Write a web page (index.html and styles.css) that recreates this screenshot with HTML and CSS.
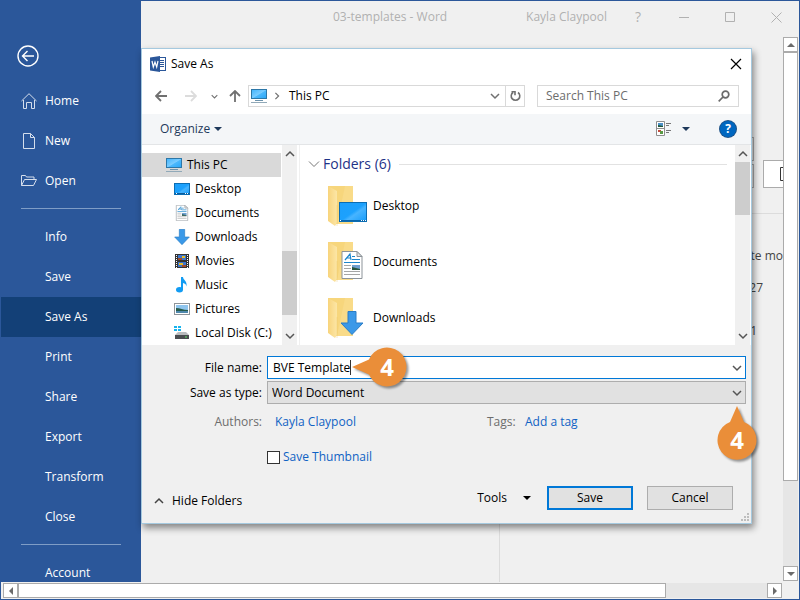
FILE: index.html
```html
<!DOCTYPE html>
<html lang="en">
<head>
<meta charset="utf-8">
<title>03-templates - Word</title>
<link rel="stylesheet" href="styles.css">
</head>
<body>
<svg class="defs" aria-hidden="true">
  <defs>
    <linearGradient id="screen" x1="0" y1="0" x2="1" y2="1"><stop offset="0" stop-color="#3fb2fb"/><stop offset=".5" stop-color="#7accff"/><stop offset=".55" stop-color="#4bb8fc"/><stop offset="1" stop-color="#2aa6f7"/></linearGradient>
    <linearGradient id="desk" x1="0" y1="0" x2="1" y2="1"><stop offset="0" stop-color="#1c9ffb"/><stop offset=".5" stop-color="#1ca1fd"/><stop offset=".6" stop-color="#47b4ff"/><stop offset="1" stop-color="#149bfa"/></linearGradient>
    <linearGradient id="flap" x1="0" y1="0" x2="1" y2="0"><stop offset="0" stop-color="#f8d47c"/><stop offset="1" stop-color="#fce6a6"/></linearGradient>
    <symbol id="pc" viewBox="0 0 16 16"><rect x=".5" y="1.5" width="15" height="9" fill="url(#screen)" stroke="#2c77a8"/><path d="M4 12.5h8" stroke="#6d93ac"/><path d="M0 14.5h16" stroke="#91a9b8"/></symbol>
    <symbol id="desktop" viewBox="0 0 16 16"><rect x=".5" y="2.5" width="15" height="11" fill="url(#desk)" stroke="#0b6db3"/><path d="M1 12.5h14" stroke="#0a5c9c"/><path d="M2 12.5h1M11 12.5h1M13 12.5h1" stroke="#fff"/></symbol>
    <symbol id="desktop-big" viewBox="0 0 28 21"><rect x=".5" y=".5" width="27" height="19" fill="url(#desk)" stroke="#0b6db3"/><path d="M1 18.5h26" stroke="#0a66ab"/><path d="M1 18.500h1M22 18.500h1M24 18.500h1M26 18.500h1" stroke="#fff"/></symbol>
    <symbol id="doc" viewBox="0 0 24 28"><path d="M2 .5h15l5 5v22H2z" fill="#fff" stroke="#8c9399"/><path d="M17 .5v5h5z" fill="#e5e5e5" stroke="#8c9399"/><path d="M5 9l5-6 1 6M6 7h5M12 5.500h3M12 8.500h8M4 11.500h16" fill="none" stroke="#1c86cc" stroke-width="1.2"/><path d="M4 14.500h7M4 17.500h7M4 20.500h16M4 23.500h16" stroke="#a6a6a6"/><rect x="12" y="14" width="8" height="5" fill="#6f9fd0"/><path d="M12 19v-3l8 2v1z" fill="#27553f"/></symbol>
    <symbol id="down" viewBox="0 0 24 24"><path d="M8 .5h8V12h7L12 23.5 1 12h7z" fill="#3b99e8" stroke="#2b7dc6"/></symbol>
    <symbol id="folder" viewBox="0 0 40 42"><path d="M1 1h25v38H5z" fill="#f7d67c"/><path d="M18 1h8v38H10z" fill="#fadd8f" opacity=".7"/><path d="M1 1l9 5v32l-2 3-7-5z" fill="url(#flap)"/><path d="M10 20v21" stroke="#e7bf60" opacity=".35"/></symbol>
    <symbol id="chev" viewBox="0 0 10 10"><path d="M1 3l4 4 4-4" fill="none" stroke="currentColor" stroke-width="1.5"/></symbol>
    <symbol id="tri" viewBox="0 0 8 8"><path d="M0 2h8L4 6z" fill="currentColor"/></symbol>
  </defs>
</svg>
<div class="app">
  <div class="workspace">
    <nav class="side">
      <button class="back" aria-label="Back"><svg width="22" height="22" viewBox="0 0 22 22" fill="none" stroke="#fff" stroke-width="1.4"><circle cx="11" cy="11" r="10"/><path d="M17 11H6M10.500 6L5.500 11l5 5"/></svg></button>
      <a href="#"><svg width="16" height="16" viewBox="0 0 16 16" fill="none" stroke="#d5deec"><path d="M.5 8L8 .7 15.500 8M2.500 7v8.500h3v-6h5v6h3V7"/></svg>Home</a>
      <a href="#"><svg width="16" height="16" viewBox="0 0 16 16" fill="none" stroke="#d5deec"><path d="M2.500.5h7l4 4v11h-11zM9.500.5v4h4"/></svg>New</a>
      <a href="#"><svg width="16" height="16" viewBox="0 0 16 16" fill="none" stroke="#d5deec"><path d="M.5 12.500v-10h4l1 1.500h7.500v2.500M.5 12.500l3-6h12l-3 6z"/></svg>Open</a>
      <hr>
      <a href="#">Info</a>
      <a href="#">Save</a>
      <a href="#" class="current">Save As</a>
      <a href="#">Print</a>
      <a href="#">Share</a>
      <a href="#">Export</a>
      <a href="#">Transform</a>
      <a href="#">Close</a>
      <hr>
      <a href="#">Account</a>
    </nav>
    <div class="stage">
      <header class="titlebar">
        <span class="doc-title">03-templates - Word</span>
        <span class="user">Kayla Claypool</span>
        <button aria-label="Help">?</button>
        <button aria-label="Minimize"><svg width="11" height="11" viewBox="0 0 11 11"><path d="M0 5.500h10" stroke="currentColor"/></svg></button>
        <button aria-label="Maximize"><svg width="11" height="11" viewBox="0 0 11 11"><path d="M.5.5h9v9h-9z" fill="none" stroke="currentColor"/></svg></button>
        <button aria-label="Close window"><svg width="11" height="11" viewBox="0 0 11 11"><path d="M.5.5l10 10M10.500.5l-10 10" stroke="currentColor"/></svg></button>
      </header>
      <div class="under">
        <div class="places"></div>
        <main class="files">
          <div class="fields"><div class="stubs"><i></i><i></i></div><button class="stub-save" aria-label="Save"><svg width="3" height="14" viewBox="0 0 3 14"><path d="M3 .5H.5v13H3" fill="none" stroke="#333"/></svg></button></div>
          <p class="t1">te mo</p><p class="t2">27</p><p class="t3">1</p>
        </main>
        <div class="vbar"><button aria-label="Scroll up"><svg class="flip" width="8" height="8"><use href="#tri"/></svg></button><div class="vthumb"></div><span class="track"></span><button aria-label="Scroll down"><svg width="8" height="8"><use href="#tri"/></svg></button></div>
      </div>
    </div>
  </div>
  <div class="hbar"><button aria-label="Scroll left"><svg class="left" width="8" height="8"><use href="#tri"/></svg></button><div class="hthumb"></div><span class="track"></span><button aria-label="Scroll right"><svg class="right" width="8" height="8"><use href="#tri"/></svg></button></div>

  <section class="dialog" role="dialog" aria-labelledby="dlg-title">
    <header class="dlg-head">
      <svg width="16" height="16" viewBox="0 0 16 16"><rect x="8.500" y="1.500" width="7" height="13" fill="#fff" stroke="#2b579a"/><path d="M10 4.500h4M10 6.500h4M10 8.500h4M10 10.500h4" stroke="#2b579a"/><path d="M0 1.500L10 0v16L0 14.500z" fill="#2b579a"/><path d="M2 5l1.300 6L5 6l1.700 5L8 5" fill="none" stroke="#fff" stroke-width="1.200"/></svg>
      <h1 id="dlg-title">Save As</h1>
      <button aria-label="Close"><svg width="12" height="12" viewBox="0 0 12 12"><path d="M1 1l10 10M11 1L1 11" stroke="#000" stroke-width="1.200"/></svg></button>
    </header>
    <div class="navrow">
      <button aria-label="Back"><svg width="12" height="12" viewBox="0 0 12 12" fill="none" stroke="#707070" stroke-width="1.800"><path d="M12 6H1M6 1L1 6l5 5"/></svg></button>
      <button aria-label="Forward"><svg width="12" height="12" viewBox="0 0 12 12" fill="none" stroke="#dcdcdc" stroke-width="1.800"><path d="M0 6h11M6 1l5 5-5 5"/></svg></button>
      <button class="recent" aria-label="Recent"><svg width="7" height="7"><use href="#chev"/></svg></button>
      <button aria-label="Up"><svg width="12" height="12" viewBox="0 0 12 12" fill="none" stroke="#707070" stroke-width="1.800"><path d="M6 12V1M1 6l5-5 5 5"/></svg></button>
      <div class="address"><svg width="16" height="16"><use href="#pc"/></svg><svg class="right dim" width="8" height="8"><use href="#chev"/></svg><span>This PC</span><button aria-label="Previous locations"><svg width="10" height="10"><use href="#chev"/></svg></button></div>
      <button class="refresh" aria-label="Refresh"><svg width="11" height="12" viewBox="0 0 11 12" fill="none" stroke="#707070" stroke-width="1.600"><path d="M8 2.500A4.300 4.300 0 1 1 3 2.500M5 5.200V1.800H1.500"/></svg></button>
      <label class="search"><input type="text" placeholder="Search This PC" aria-label="Search This PC"><svg width="12" height="12" viewBox="0 0 12 12" fill="none" stroke="#6b6b6b" stroke-width="1.700"><circle cx="7.500" cy="4.500" r="3.300"/><path d="M5 7L.7 11.300"/></svg></label>
    </div>
    <div class="tools">
      <button>Organize<svg width="8" height="8"><use href="#tri"/></svg></button>
      <button class="view" aria-label="Change view"><svg width="16" height="16" viewBox="0 0 16 16"><path d="M.5.5h8v14h-8zM.5 7.500h8" fill="#fff" stroke="#8e8e8e"/><path d="M2 2h5v4H2z" fill="#4d91c9"/><path d="M2 6V4l5 1v1z" fill="#1f5738"/><path d="M2 9h3v2H2z" fill="#c34b3e"/><path d="M4 10h3v3H4z" fill="#5a9a45"/><path d="M10 2.500h5M10 4.500h3M10 9.500h5M10 11.500h3" stroke="#777"/></svg></button>
      <button class="viewmenu" aria-label="View menu"><svg width="8" height="8"><use href="#tri"/></svg></button>
      <button class="help" aria-label="Help">?</button>
    </div>
    <div class="browser">
      <ul class="tree">
        <li class="root"><svg width="16" height="16"><use href="#pc"/></svg>This PC</li>
        <li><svg width="16" height="16"><use href="#desktop"/></svg>Desktop</li>
        <li><svg width="16" height="16"><use href="#doc"/></svg>Documents</li>
        <li><svg width="16" height="16"><use href="#down"/></svg>Downloads</li>
        <li><svg width="16" height="16" viewBox="0 0 16 16"><path d="M1 1h14v14H1z" fill="#333"/><path d="M2.500 2v13M13.500 2v13" stroke="#fff" stroke-dasharray="1 1"/><path d="M4 2h8v5H4zM4 9h8v5H4z" fill="#3d76cc"/><path d="M4 5h4v2H4zM8 12h4v2H8z" fill="#a04a26"/><path d="M8 3h3v2H8zM5 10h4v2H5z" fill="#e8bd2a"/></svg>Movies</li>
        <li><svg width="16" height="16" viewBox="0 0 16 16"><ellipse cx="5.500" cy="12.800" rx="3.500" ry="2.700" fill="#129cf3"/><path d="M7 0h2c0 3 4.500 4 3.500 9.500C12 7 11 6.500 9 6v7H7z" fill="#129cf3"/></svg>Music</li>
        <li><svg width="16" height="16" viewBox="0 0 16 16"><rect x=".5" y="2.500" width="15" height="11" fill="#fff" stroke="#8e9499"/><path d="M2 4h12v8H2z" fill="#8fc5ee"/><path d="M2 7c4 0 7 2 12 2v1H2z" fill="#265b4a"/><path d="M2 10h12v2H2z" fill="#4f88ad"/></svg>Pictures</li>
        <li><svg width="16" height="16" viewBox="0 0 16 16"><path d="M0 1h3v2H0zM4 1h3v2H4zM0 4h3v2H0zM4 4h3v2H4z" fill="#18b4ee"/><path d="M4 7h8l3 3H1z" fill="#b9bcbe"/><path d="M1 10h14v4H1z" fill="#4a4d50"/><path d="M11 12h2" stroke="#5cdf63"/></svg>Local Disk (C:)</li>
      </ul>
      <div class="bar tree-bar"><svg class="flip" width="10" height="10"><use href="#chev"/></svg><span></span><svg width="10" height="10"><use href="#chev"/></svg></div>
      <div class="list">
        <h2><svg width="12" height="12" viewBox="0 0 12 12"><path d="M1 3.500l5 5 5-5" fill="none" stroke="#777"/></svg>Folders (6)</h2>
        <ul>
          <li><span class="pic"><svg width="40" height="42"><use href="#folder"/></svg><svg class="over screen" width="28" height="21"><use href="#desktop-big"/></svg></span>Desktop</li>
          <li><span class="pic"><svg width="40" height="42"><use href="#folder"/></svg><svg class="over" width="24" height="28"><use href="#doc"/></svg></span>Documents</li>
          <li><span class="pic"><svg width="40" height="42"><use href="#folder"/></svg><svg class="over" width="24" height="24"><use href="#down"/></svg></span>Downloads</li>
        </ul>
      </div>
      <div class="bar list-bar"><svg class="flip" width="10" height="10"><use href="#chev"/></svg><span></span><svg width="10" height="10"><use href="#chev"/></svg></div>
    </div>
    <form class="form" onsubmit="return false">
      <label class="cap" for="fname">File name:</label>
      <div class="field name"><input id="fname" type="text" value="BVE Template"><i class="caret"></i><svg class="drop" width="10" height="10"><use href="#chev"/></svg>
        <div class="callout west"><svg width="60" height="48" viewBox="0 0 60 48"><path d="M0 20L17 12.500A19.500 19.500 0 1 1 17 27.500z"/></svg><b>4</b></div>
      </div>
      <label class="cap" for="ftype">Save as type:</label>
      <div class="field type"><select id="ftype"><option>Word Document</option></select><svg class="drop" width="10" height="10"><use href="#chev"/></svg>
        <div class="callout north"><svg width="48" height="62" viewBox="0 0 48 62"><path d="M20 0L27 16A19.500 19.500 0 1 1 13 16z"/></svg><b>4</b></div>
      </div>
      <span class="cap grey">Authors:</span>
      <div class="meta"><a href="#">Kayla Claypool</a><span class="grey">Tags:</span><a href="#">Add a tag</a></div>
      <label class="thumb"><input type="checkbox">Save Thumbnail</label>
    </form>
    <footer class="foot">
      <button class="hide"><svg class="flip" width="10" height="10"><use href="#chev"/></svg>Hide Folders</button>
      <button class="toolmenu">Tools<svg width="8" height="8"><use href="#tri"/></svg></button>
      <button class="btn primary">Save</button>
      <button class="btn">Cancel</button>
    </footer>
    <svg class="grip" width="9" height="9" viewBox="0 0 9 9" fill="#bdbdbd"><path d="M6 0h2v2H6zM3 3h2v2H3zM6 3h2v2H6zM0 6h2v2H0zM3 6h2v2H3zM6 6h2v2H6z"/></svg>
  </section>
</div>
</body>
</html>
```
FILE: styles.css
```css
* { box-sizing: border-box; }
body { margin: 0; font: 12px/16px "Open Sans", "Noto Sans", sans-serif; color: #000; background: #f0f0f0; }
button, input, select { font: inherit; color: inherit; padding: 0; border: 0; background: none; }
button { display: flex; align-items: center; justify-content: center; }
a { color: inherit; text-decoration: none; }
ul, h1, h2, p { margin: 0; padding: 0; list-style: none; font-weight: 400; }
svg { flex: none; display: block; }
.defs { position: absolute; width: 0; height: 0; }
.flip { transform: rotate(180deg); }
.left { transform: rotate(90deg); }
.right { transform: rotate(-90deg); }

.app { position: relative; height: 100vh; display: flex; flex-direction: column; border: 1px solid #2b579a; overflow: hidden; }
.workspace { flex: 1; min-height: 0; display: flex; }

.side { width: 140px; flex: none; overflow: hidden; background: #2b579a; color: #fff; padding-top: 34px; }
.back { width: 22px; height: 46px; margin-left: 16px; padding-bottom: 4px; }
.side a { display: flex; align-items: center; height: 40px; padding-left: 44px; }
.side a:has(svg) { padding-left: 20px; gap: 8px; }
.side .current { background: #134077; }
.side hr { height: 1px; margin: 7px 20px 8px; border: 0; background: #7f9dc6; }

.stage { flex: 1; min-width: 0; display: flex; flex-direction: column; }
.titlebar { height: 36px; padding: 0 0 4px 192px; display: flex; align-items: center; color: #b1b1b1; }
.titlebar button { width: 46px; }
.titlebar button:nth-of-type(1) { width: 30px; margin: 0 8px 0 16px; font-size: 14px; }
.doc-title { flex: 1; }
.under { flex: 1; min-height: 0; display: flex; }
.places { flex: 1 1 358px; margin-top: 60px; border-right: 1px solid #dcdcdc; }
.files { flex: 1 1 283px; overflow: hidden; color: #444; text-align: right; }
.fields { display: flex; justify-content: flex-end; align-items: flex-end; gap: 9px; height: 177px; padding: 100px 0 25px; border-bottom: 1px solid #dcdcdc; }
.stubs { flex: 1; display: flex; flex-direction: column; gap: 3px; }
.stubs i { height: 24px; border: 1px solid #ababab; }
.stub-save { width: 20px; height: 28px; background: #fff; border: 1px solid #ababab; border-right: 0; justify-content: flex-end; }
.t1 { padding-top: 34px; }
.t2 { padding: 16px 20px 0 0; }
.t3 { padding: 27px 26px 0 0; }

.vbar { width: 15px; margin: 0 1px 1px 0; display: flex; flex-direction: column; background: #e6e6e6; }
.vbar button, .hbar button { width: 15px; height: 15px; border: 1px solid #ababab; background: #fff; color: #6b6b6b; }
.vthumb { flex: 429; border: 1px solid #ababab; background: #fff; }
.vbar .track { flex: 85; }
.hbar { height: 17px; padding: 1px 17px 1px 2px; display: flex; background: #f0f0f0; }
.hthumb { flex: 649; border: 1px solid #ababab; background: #fff; }
.hbar .track { flex: 101; background: #e6e6e6; }

.dialog { position: absolute; left: 140px; top: 47px; right: 47px; display: flex; flex-direction: column; background: #f0f0f0; border: 1px solid #a5c9df; box-shadow: 2px 4px 7px rgba(0, 0, 0, .45); }
.dlg-head { height: 30px; padding: 0 9px 0 8px; display: flex; align-items: center; gap: 5px; background: #fff; }
.dlg-head h1 { flex: 1; font-size: 12px; }
.navrow { height: 35px; padding: 6px 12px 7px; display: flex; align-items: stretch; background: #fff; color: #707070; }
.navrow > button:nth-of-type(-n+2) { width: 14px; margin-right: 16px; }
.navrow > button:nth-of-type(2) { margin-right: 12px; }
.navrow .recent { width: 8px; margin-right: 9px; }
.navrow > button:nth-of-type(4) { width: 16px; margin-right: 5px; }
.address { flex: 249; display: flex; align-items: center; padding: 0 5px 0 2px; border: 1px solid #d9d9d9; }
.address .dim { margin: 0 8px 0 6px; }
.address span { flex: 1; color: #000; }
.refresh { width: 20px; margin-left: -1px; border: 1px solid #d9d9d9; }
.search { flex: 184; margin-left: 12px; display: flex; align-items: center; padding: 0 8px; border: 1px solid #d9d9d9; }
.search input { flex: 1; min-width: 0; }
.search input::placeholder { color: #6d6d6d; opacity: 1; }
.tools { height: 31px; padding: 0 15px 0 18px; display: flex; align-items: center; background: #f4f6f8; border-bottom: 1px solid #e3e5e7; color: #1e395b; }
.tools button { gap: 4px; }
.tools .view { margin-left: auto; }
.viewmenu { margin: 0 30px 0 10px; }
.tools .help { width: 16px; height: 16px; border-radius: 50%; background: #0067c0; color: #fff; font-weight: 700; box-shadow: 0 0 0 1px #1d5288; }

.browser { height: 200px; display: flex; background: #fff; overflow: hidden; }
.tree { width: 139px; padding-top: 8px; overflow: hidden; white-space: nowrap; }
.tree li { height: 24px; padding-left: 32px; display: flex; align-items: center; gap: 5px; }
.tree .root { padding-left: 24px; background: #d9d9d9; }
.bar { width: 15px; display: flex; flex-direction: column; align-items: center; padding: 4px 0; background: #f0f0f0; color: #555; }
.bar span { width: 100%; background: #cdcdcd; }
.bar svg:last-child { margin-top: auto; }
.tree-bar { margin-left: 1px; }
.tree-bar span { height: 64px; margin-top: 92px; }
.list-bar { margin-right: 1px; }
.list-bar span { height: 53px; margin-top: 3px; }
.list { flex: 1; margin-left: 2px; padding: 8px 8px 0 8px; border-left: 1px solid #f0f0f0; }
.list h2 { display: flex; align-items: center; gap: 3px; height: 22px; font-size: 14px; color: #1e3287; }
.list h2::after { content: ""; flex: 1; height: 1px; margin-left: 5px; background: #e2e2e2; }
.list ul { padding: 3px 0 0 19px; }
.list li { height: 56px; display: flex; align-items: center; gap: 6px; }
.pic { position: relative; }
.over { position: absolute; left: 13px; bottom: 4px; }
.screen { left: 12px; }

.form { padding: 11px 5px 0 0; display: grid; grid-template-columns: 120px 1fr; column-gap: 5px; row-gap: 2px; }
.cap { text-align: right; align-self: center; }
.grey { color: #6d6d6d; }
.field { position: relative; height: 23px; display: flex; align-items: center; background: #fff; border: 1px solid #0078d7; }
.field input { width: 77px; margin-left: 5px; outline: 0; }
.caret { width: 1px; height: 15px; background: #333; }
.drop { margin-left: auto; margin-right: 3px; color: #555; }
.field.type { background: #e1e1e1; border-color: #adadad; }
.type select { appearance: none; flex: 1; padding-left: 4px; }
.callout { position: absolute; z-index: 1; }
.callout svg { overflow: visible; fill: #ea8e39; filter: drop-shadow(2px 2px 1px rgba(0, 0, 0, .4)); }
.callout b { position: absolute; font-size: 24px; line-height: 40px; width: 40px; text-align: center; color: #fff; }
.west { left: 84px; top: -10px; }
.west b { left: 15px; top: 0; }
.north { right: -12px; top: 24px; width: 40px; }
.north b { left: 0; top: 14px; }
.meta { display: flex; align-items: center; height: 31px; padding-left: 8px; }
.meta a, .thumb { color: #0f62c4; }
.meta a:first-child { width: 212px; }
.meta .grey { width: 38px; }
.thumb { grid-column: 2; display: flex; align-items: center; gap: 3px; height: 36px; }
.thumb input { appearance: none; width: 13px; height: 13px; margin: 0; border: 1px solid #333; background: #fff; }
.foot { display: flex; align-items: center; height: 48px; padding: 0 18px 3px 12px; }
.foot .hide { margin-right: auto; padding-top: 6px; gap: 8px; }
.hide svg { color: #444; }
.toolmenu { gap: 16px; margin-right: 16px; }
.btn { width: 86px; height: 24px; border: 1px solid #adadad; background: #e1e1e1; }
.btn + .btn { margin-left: 14px; }
.btn.primary { border: 2px solid #0078d7; }
.grip { position: absolute; right: 1px; bottom: 1px; }
```
